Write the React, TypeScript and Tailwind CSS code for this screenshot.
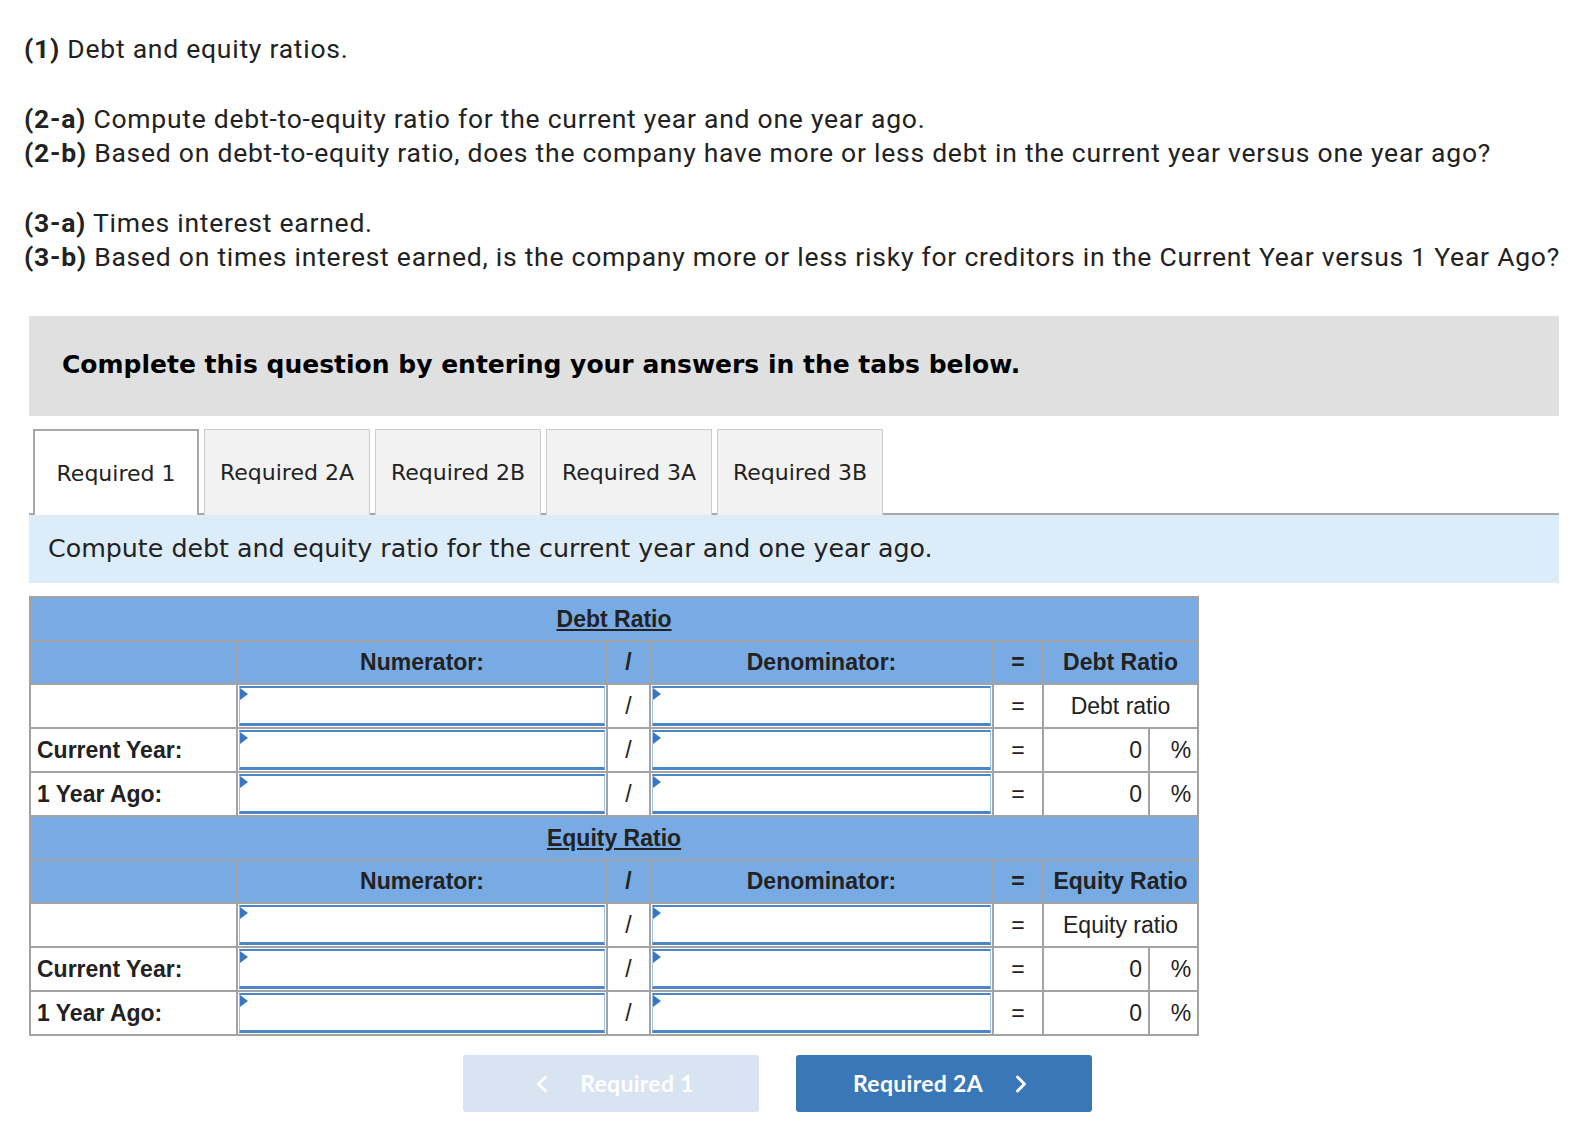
import { ChevronLeft, ChevronRight } from "lucide-react";

const tabs = ["Required 1", "Required 2A", "Required 2B", "Required 3A", "Required 3B"];

const cell = "border-2 border-[#a3a3a3]";

function InputCell() {
  return (
    <td className={`${cell} p-0 h-[44px]`}>
      <div className="relative mx-[1px] h-[40px] border-x border-x-[#9fc3ea] border-t-2 border-t-[#4a86c8] border-b-[3px] border-b-[#4a86c8] bg-white">
        <span className="absolute left-0 top-0 h-0 w-0 border-y-[6px] border-l-[8px] border-y-transparent border-l-[#3a77c2]" />
      </div>
    </td>
  );
}

function RatioBlock({ title, result, resultLabel }: { title: string; result: string; resultLabel: string }) {
  const rows = ["", "Current Year:", "1 Year Ago:"];
  return (
    <>
      <tr className="bg-[#78aae3] h-[44px]">
        <td colSpan={7} className={`${cell} text-center font-bold underline underline-offset-2`}>
          {title}
        </td>
      </tr>
      <tr className="bg-[#78aae3] h-[43px] font-bold">
        <td className={cell}></td>
        <td className={`${cell} text-center`}>Numerator:</td>
        <td className={`${cell} text-center`}>/</td>
        <td className={`${cell} text-center`}>Denominator:</td>
        <td className={`${cell} text-center`}>=</td>
        <td colSpan={2} className={`${cell} text-center whitespace-nowrap`}>
          {result}
        </td>
      </tr>
      {rows.map((label, i) => (
        <tr key={i} className="bg-white h-[44px]">
          <td className={`${cell} px-[6px] font-bold`}>{label}</td>
          <InputCell />
          <td className={`${cell} text-center`}>/</td>
          <InputCell />
          <td className={`${cell} text-center`}>=</td>
          {i === 0 ? (
            <td colSpan={2} className={`${cell} text-center`}>
              {resultLabel}
            </td>
          ) : (
            <>
              <td className={`${cell} text-right pr-[6px]`}>0</td>
              <td className={`${cell} text-right pr-[6px]`}>%</td>
            </>
          )}
        </tr>
      ))}
    </>
  );
}

export default function App() {
  return (
    <div className="h-[1141px] w-[1571px] overflow-hidden bg-white text-[#222]">
      <div className="pl-[24px] pt-[32px] font-['Roboto',sans-serif] text-[26.5px] leading-[34px] tracking-[0.75px] text-[#222]">
        <p>
          <b>(1)</b> Debt and equity ratios.
        </p>
        <p className="mt-[36px]">
          <b>(2-a)</b> Compute debt-to-equity ratio for the current year and one year ago.
        </p>
        <p>
          <b>(2-b)</b> Based on debt-to-equity ratio, does the company have more or less debt in the current year versus one year ago?
        </p>
        <p className="mt-[36px]">
          <b>(3-a)</b> Times interest earned.
        </p>
        <p className="whitespace-nowrap">
          <b>(3-b)</b> Based on times interest earned, is the company more or less risky for creditors in the Current Year versus 1 Year Ago?
        </p>
      </div>

      <div className="ml-[29px] mt-[42px] w-[1530px] font-['DejaVu_Sans',sans-serif]">
        <div className="flex h-[100px] items-center bg-[#e0e0e0] pl-[33px] pb-[2px] text-[25px] font-bold text-black">
          Complete this question by entering your answers in the tabs below.
        </div>

        <div className="mt-[13px] flex gap-[5px] border-b-2 border-[#a8a8a8] pl-[4px]">
          {tabs.map((t, i) => (
            <div
              key={t}
              className={`-mb-[2px] flex h-[86px] w-[166px] items-center justify-center text-[22px] text-[#222] ${
                i === 0
                  ? "border-2 border-b-0 border-[#a8a8a8] bg-white"
                  : "border border-b-0 border-[#cccccc] bg-[#f2f2f2]"
              }`}
            >
              {t}
            </div>
          ))}
        </div>

        <div className="flex h-[68px] items-center bg-[#dcecf9] pl-[19px] text-[25.3px] text-[#222]">
          Compute debt and equity ratio for the current year and one year ago.
        </div>
      </div>

      <div className="ml-[29px] mt-[13px]">
        <table className="w-[1168px] table-fixed border-collapse font-['Liberation_Sans',Arial,sans-serif] text-[23px] text-[#222]">
          <colgroup>
            <col className="w-[207px]" />
            <col className="w-[370px]" />
            <col className="w-[43px]" />
            <col className="w-[343px]" />
            <col className="w-[50px]" />
            <col className="w-[106px]" />
            <col className="w-[49px]" />
          </colgroup>
          <tbody>
            <RatioBlock title="Debt Ratio" result="Debt Ratio" resultLabel="Debt ratio" />
            <RatioBlock title="Equity Ratio" result="Equity Ratio" resultLabel="Equity ratio" />
          </tbody>
        </table>
      </div>

      <div className="ml-[463px] mt-[19px] flex gap-[37px] font-['Lato',sans-serif] text-[23px] font-bold tracking-[0.3px]">
        <button className="flex h-[57px] w-[296px] items-center justify-center gap-[24px] rounded-[3px] bg-[#d8e4f1] text-white">
          <ChevronLeft className="h-[28px] w-[28px]" strokeWidth={2.5} />
          Required 1
        </button>
        <button className="flex h-[57px] w-[296px] items-center justify-center gap-[24px] rounded-[3px] bg-[#3a77b9] text-white">
          Required 2A
          <ChevronRight className="h-[28px] w-[28px]" strokeWidth={2.5} />
        </button>
      </div>
    </div>
  );
}
